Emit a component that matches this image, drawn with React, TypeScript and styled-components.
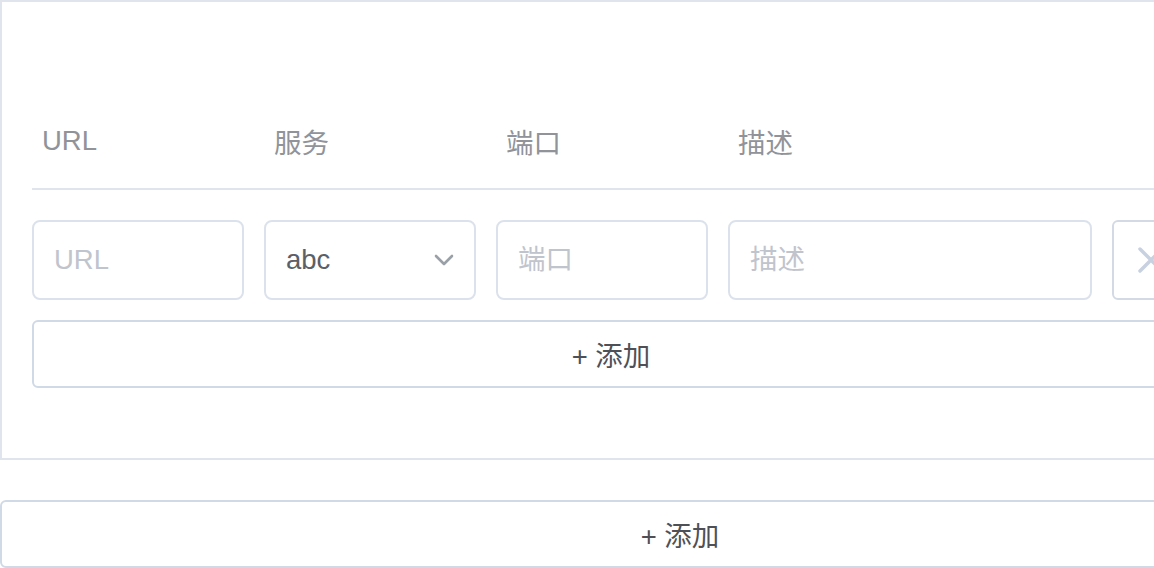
import React from "react";
import styled, { createGlobalStyle } from "styled-components";

const Global = createGlobalStyle`
  html, body { margin: 0; padding: 0; background: #fff; overflow: hidden; }
  body { font-family: "Liberation Sans", "Noto Sans CJK SC", sans-serif; }
  * { box-sizing: border-box; }
`;

const Page = styled.div`
  width: 1360px;
  display: flex;
  flex-direction: column;
  gap: 40px;
`;

const Panel = styled.section`
  border: 2px solid #dfe4ed;
  border-right: none;
  padding: 92px 0 70px 30px;
  width: 1360px;
`;

const Inner = styled.div`
  width: 1158px;
  display: flex;
  flex-direction: column;
`;

const HeaderRow = styled.div`
  display: grid;
  grid-template-columns: 212px 212px 212px 364px 78px;
  column-gap: 20px;
  height: 96px;
  align-items: center;
  border-bottom: 2px solid #dfe4ed;
`;

const HeaderCell = styled.div`
  padding-left: 10px;
  font-size: 27.5px;
  color: #909399;
`;

const InputRow = styled.div`
  display: grid;
  grid-template-columns: 212px 212px 212px 364px 78px;
  column-gap: 20px;
  margin-top: 30px;
  height: 80px;
`;

const TextInput = styled.input`
  height: 80px;
  width: 100%;
  border: 2px solid #dce2ec;
  border-radius: 8px;
  padding: 0 20px;
  font-family: inherit;
  font-size: 27.5px;
  color: #606266;
  outline: none;
  background: #fff;
  &::placeholder { color: #c0c4cc; }
`;

const SelectBox = styled.div`
  height: 80px;
  border: 2px solid #dce2ec;
  border-radius: 8px;
  padding: 0 20px 0 20px;
  display: flex;
  align-items: center;
  justify-content: space-between;
  font-size: 27.5px;
  color: #5c6066;
`;

const DeleteButton = styled.button`
  height: 80px;
  border: 2px solid #d3dae6;
  border-radius: 6px;
  background: #fff;
  display: flex;
  align-items: center;
  justify-content: center;
  padding: 0;
`;

const AddButton = styled.button<{ $full?: boolean }>`
  width: ${(p) => (p.$full ? "1360px" : "100%")};
  height: 68px;
  border: 2px solid #d0d9e6;
  border-radius: 6px;
  background: #fff;
  font-family: "Liberation Sans", "Noto Sans CJK SC", sans-serif;
  font-size: 27.5px;
  color: #4d5157;
  display: flex;
  align-items: center;
  justify-content: center;
  margin-top: ${(p) => (p.$full ? "0" : "20px")};
`;

const Chevron = () => (
  <svg width="20" height="12" viewBox="0 0 20 12" fill="none">
    <path d="M2 2 L10 10 L18 2" stroke="#9aa0a8" strokeWidth="2.6" strokeLinecap="round" strokeLinejoin="round" />
  </svg>
);

const Cross = () => (
  <svg width="28" height="28" viewBox="0 0 28 28" fill="none">
    <path d="M3 3 L25 25 M25 3 L3 25" stroke="#c8d1e0" strokeWidth="3.5" strokeLinecap="round" />
  </svg>
);

export default function App() {
  return (
    <>
      <Global />
      <Page>
        <Panel>
          <Inner>
            <HeaderRow>
              <HeaderCell>URL</HeaderCell>
              <HeaderCell>服务</HeaderCell>
              <HeaderCell>端口</HeaderCell>
              <HeaderCell>描述</HeaderCell>
              <HeaderCell />
            </HeaderRow>
            <InputRow>
              <TextInput placeholder="URL" />
              <SelectBox>
                <span>abc</span>
                <Chevron />
              </SelectBox>
              <TextInput placeholder="端口" />
              <TextInput placeholder="描述" />
              <DeleteButton aria-label="删除">
                <Cross />
              </DeleteButton>
            </InputRow>
            <AddButton>+ 添加</AddButton>
          </Inner>
        </Panel>
        <AddButton $full>+ 添加</AddButton>
      </Page>
    </>
  );
}
